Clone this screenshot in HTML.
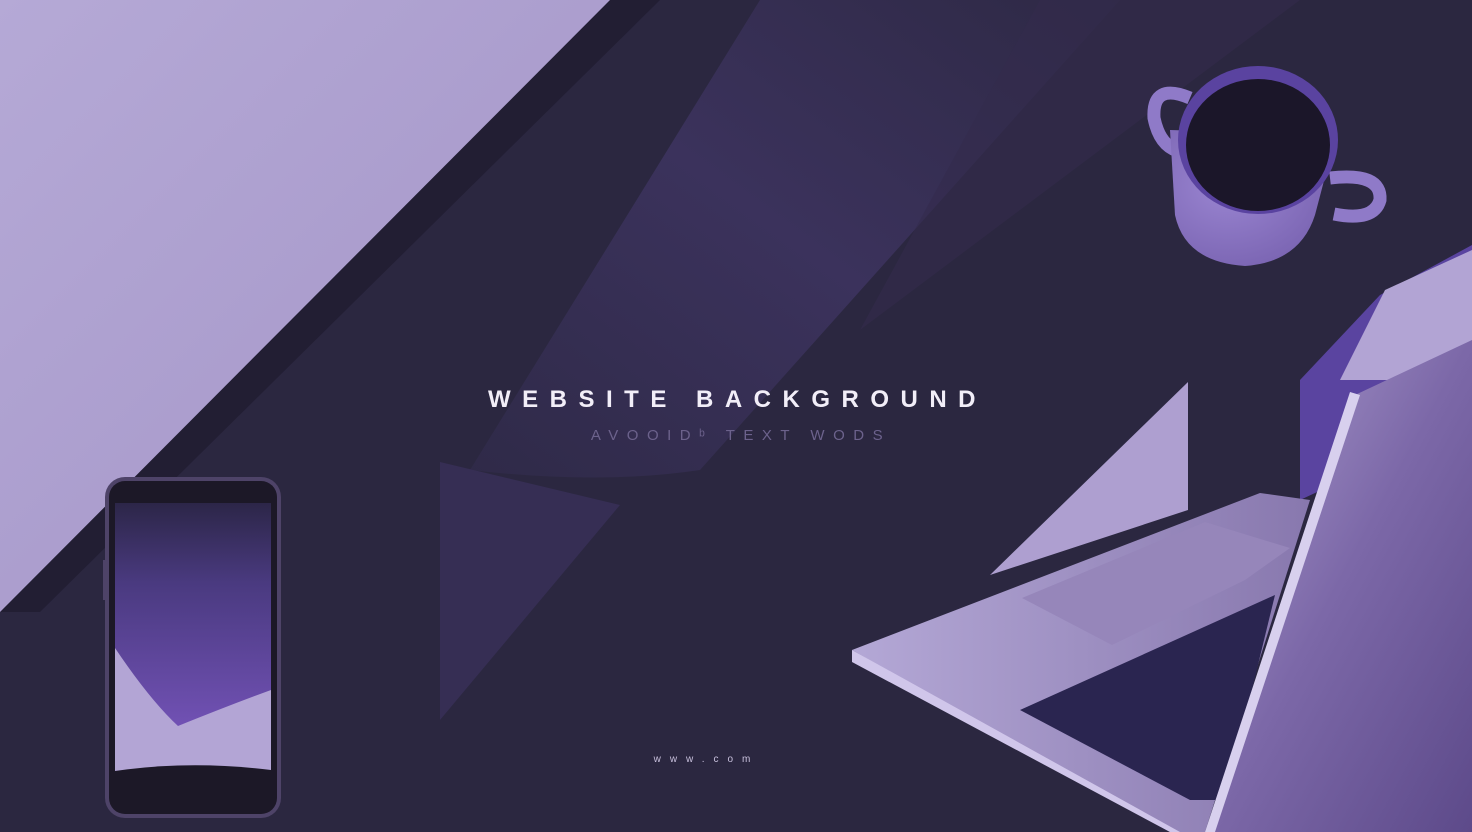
<!DOCTYPE html>
<html><head><meta charset="utf-8"><style>
html,body{margin:0;padding:0;width:1472px;height:832px;overflow:hidden;background:#2b2740;}
svg{display:block;position:absolute;left:0;top:0}
.t{position:absolute;text-align:center;font-family:"Liberation Sans",sans-serif;white-space:nowrap;}
</style></head><body>
<svg width="1472" height="832" viewBox="0 0 1472 832">
<defs>
<linearGradient id="lav" x1="0" y1="0" x2="1" y2="1"><stop offset="0" stop-color="#b5a9d6"/><stop offset="1" stop-color="#a293c6"/></linearGradient>
<linearGradient id="band" x1="1" y1="0" x2="0" y2="1"><stop offset="0" stop-color="#2e2945"/><stop offset="0.5" stop-color="#3b325c"/><stop offset="1" stop-color="#2f2a48"/></linearGradient>
<linearGradient id="scr" x1="0" y1="0" x2="0" y2="1"><stop offset="0" stop-color="#2c2648"/><stop offset="0.3" stop-color="#4a3a80"/><stop offset="1" stop-color="#7d58c4"/></linearGradient>
<linearGradient id="lid" x1="0" y1="0" x2="1" y2="1"><stop offset="0" stop-color="#b0a2d2"/><stop offset="0.5" stop-color="#7c68a8"/><stop offset="1" stop-color="#5d4a8a"/></linearGradient>
<linearGradient id="base" x1="0" y1="0" x2="1" y2="0"><stop offset="0" stop-color="#b4a8d6"/><stop offset="1" stop-color="#8878ae"/></linearGradient>
<radialGradient id="mug" cx="0.35" cy="0.4" r="0.7"><stop offset="0" stop-color="#9b86d2"/><stop offset="1" stop-color="#7862b0"/></radialGradient>
</defs>
<rect width="1472" height="832" fill="#2b2740"/>
<path d="M760,0 L1120,0 L700,470 Q600,485 470,470 Z" fill="url(#band)"/>
<path d="M1040,0 L1300,0 L860,330 Z" fill="#332c4c" opacity="0.6"/>
<path d="M440,462 L620,505 L440,720 Z" fill="#362e54"/>
<path d="M610,0 L660,0 L40,612 L0,612 Z" fill="#221e33"/>
<path d="M0,0 L610,0 L0,612 Z" fill="url(#lav)"/>
<!-- phone -->
<rect x="105" y="477" width="176" height="341" rx="20" fill="#4e4368"/>
<rect x="109" y="481" width="168" height="333" rx="16" fill="#1c1827"/>
<rect x="115" y="503" width="156" height="268" fill="url(#scr)"/>
<path d="M115,648 Q150,700 178,726 Q230,705 271,690 L271,771 L115,771 Z" fill="#b3a5d5"/>
<path d="M115,771 Q190,760 271,770 L271,790 L115,790 Z" fill="#1c1827"/>
<rect x="103" y="560" width="3" height="40" fill="#4e4368"/>
<!-- mug -->
<path d="M1190,98 Q1152,82 1154,118 Q1160,148 1182,152" fill="none" stroke="#8f7ac8" stroke-width="13"/>
<path d="M1330,178 Q1382,172 1380,200 Q1374,222 1334,214" fill="none" stroke="#8f7ac8" stroke-width="13"/>
<path d="M1170,130 L1175,215 Q1185,262 1245,266 Q1300,262 1315,215 L1336,135 Z" fill="url(#mug)"/>
<ellipse cx="1258" cy="140" rx="80" ry="74" fill="#5a43a0"/>
<ellipse cx="1258" cy="145" rx="72" ry="66" fill="#1b1629"/>
<!-- right panel -->
<path d="M1300,380 L1380,295 L1472,245 L1472,420 L1300,500 Z" fill="#5a44a0"/>
<path d="M1340,380 L1385,290 L1472,250 L1472,380 Z" fill="#b2a4d4"/>
<path d="M990,575 L1188,382 L1188,510 Z" fill="#ae9fd0"/>
<!-- laptop -->
<path d="M852,650 L1260,493 L1310,500 L1205,832 L1170,832 Z" fill="url(#base)"/>
<path d="M852,650 L852,662 L1170,832 L1180,832 Z" fill="#d0c6ea"/>
<path d="M1022,598 L1205,522 L1290,548 L1245,580 L1112,645 Z" fill="#9686ba"/>
<path d="M1020,710 L1275,595 L1225,800 L1190,800 Z" fill="#2a2550"/>
<path d="M1355,395 L1472,340 L1472,832 L1205,832 Z" fill="url(#lid)"/>
<path d="M1350,392 L1360,395 L1215,832 L1205,832 Z" fill="#d8d0ee"/>
</svg>
<div class="t" style="left:0;width:1475px;top:386px;font-size:24px;font-weight:bold;letter-spacing:11.5px;color:#f2eef8;">WEBSITE BACKGROUND</div>
<div class="t" style="left:0;width:1482px;top:427px;font-size:15px;letter-spacing:8.5px;color:#6c628c;">AVOOIDᵇ TEXT WODS</div>
<div class="t" style="left:0;width:1413px;top:754px;font-size:10px;letter-spacing:9px;color:#c8c0dc;">www.com</div>
</body></html>
